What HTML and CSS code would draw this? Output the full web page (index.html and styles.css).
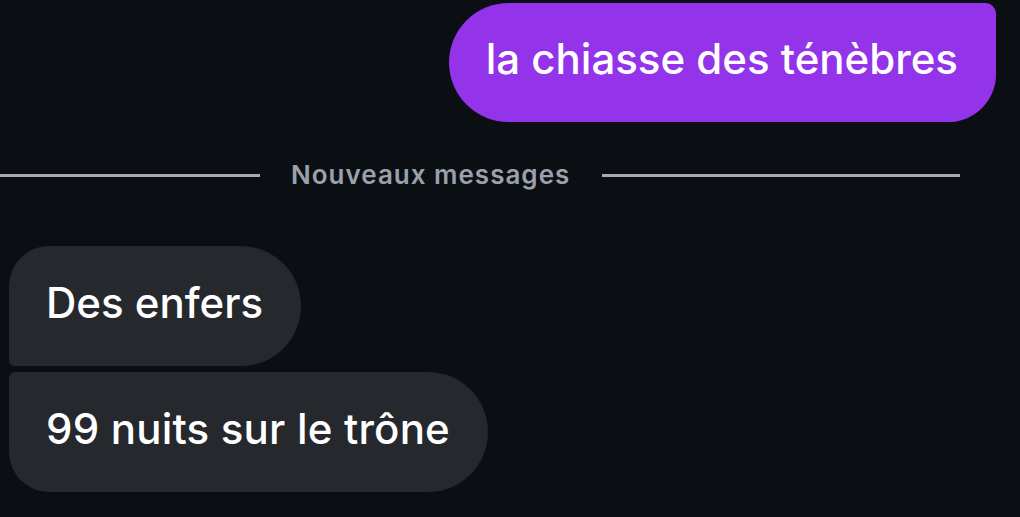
FILE: index.html
```html
<!DOCTYPE html>
<html lang="fr">
<head>
<meta charset="utf-8">
<link rel="stylesheet" href="styles.css">
</head>
<body>
<div class="chat">
  <div class="row out">
    <div class="bubble sent">la chiasse des ténèbres</div>
  </div>
  <div class="divider">
    <span class="line first"></span>
    <span class="label">Nouveaux messages</span>
    <span class="line last"></span>
  </div>
  <div class="group">
    <div class="bubble recv top">Des enfers</div>
    <div class="bubble recv bottom">99 nuits sur le trône</div>
  </div>
</div>
</body>
</html>
```
FILE: styles.css
```css
html, body {
  margin: 0;
  padding: 0;
  background: #0b0f13;
  height: 100%;
}
body {
  font-family: Inter, "Noto Sans", sans-serif;
  color: #fff;
  overflow: hidden;
}
.chat {
  display: flex;
  flex-direction: column;
  padding: 3px 24px 0 9px;
}
.row.out {
  display: flex;
  justify-content: flex-end;
}
.bubble {
  font-size: 42px;
  font-weight: 500;
  line-height: 50px;
  padding: 32px 38px 38px 37px;
  white-space: nowrap;
}
.sent {
  padding-top: 31px;
  background: #9333ea;
  border-radius: 60px 11px 48px 60px;
}
.divider {
  display: flex;
  align-items: center;
  margin: 39px 36px 0 -9px;
  height: 28px;
}
.line {
  height: 3px;
  background: #a5a9b1;
}
.line.first { width: 260px; }
.line.last { flex: 1; }
.label {
  font-size: 26px;
  font-weight: 600;
  color: #9ba1ac;
  padding: 0 32px 0 31px;
  letter-spacing: 1px;
  line-height: 28px;
}
.group {
  display: flex;
  flex-direction: column;
  align-items: flex-start;
  gap: 6px;
  margin-top: 57px;
}
.recv {
  background: #25282d;
}
.recv.top {
  border-radius: 40px 60px 60px 6px;
}
.recv.bottom {
  border-radius: 6px 60px 60px 40px;
  letter-spacing: 0.2px;
}
```
